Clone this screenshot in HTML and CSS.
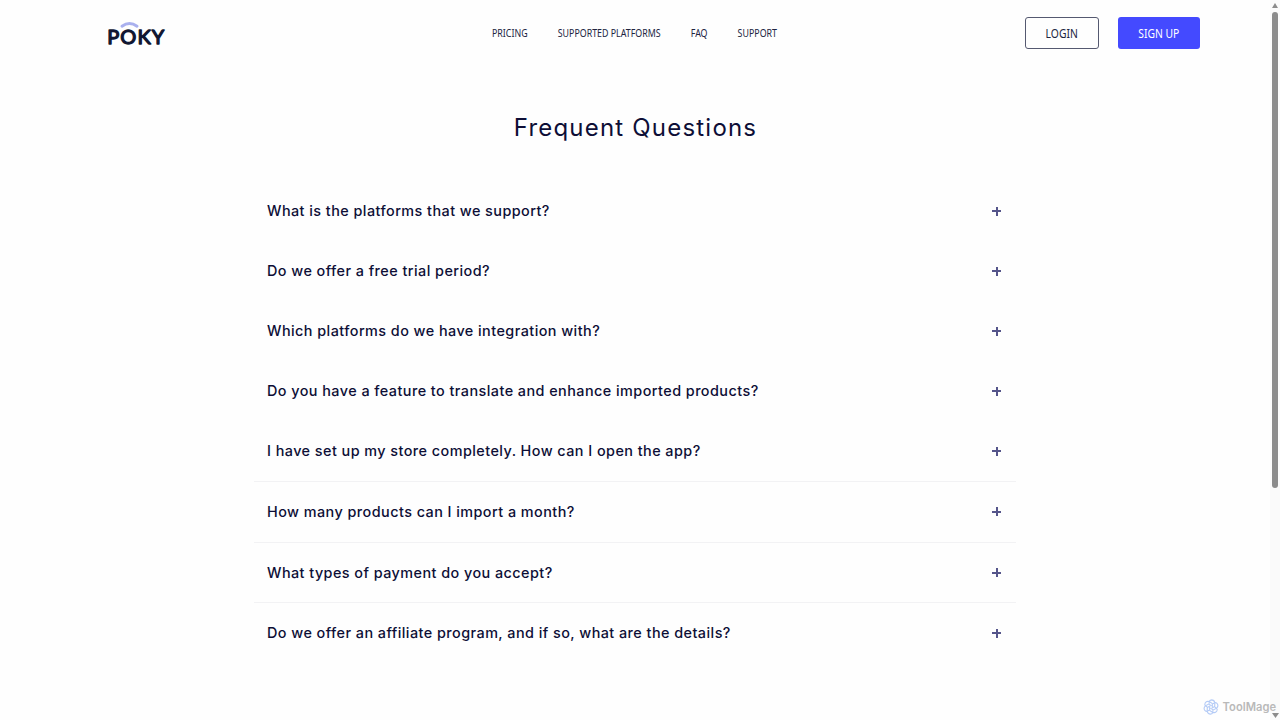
FILE: index.html
```html
<!DOCTYPE html>
<html lang="en">

<head>
    <meta charset="UTF-8">
    <meta name="viewport" content="width=device-width, initial-scale=1.0">
    <title>Poky - FAQ</title>
    <link rel="stylesheet" href="styles.css">
</head>

<body>
    <header class="header">
        <a class="logo">
            <svg width="64" height="34" viewBox="-2 0 64 34">
                <path class="logo-arc" d="M14 10.2 Q21.5 4.8 29 10.2" />
                <text class="logo-text" x="-0.8" y="27.5" textLength="57" lengthAdjust="spacing">POKY</text>
            </svg>
        </a>
        <nav class="nav">
            <a>PRICING</a>
            <a>SUPPORTED PLATFORMS</a>
            <a>FAQ</a>
            <a>SUPPORT</a>
        </nav>
        <div class="actions">
            <a class="btn btn-outline"><span>LOGIN</span></a>
            <a class="btn btn-primary"><span>SIGN UP</span></a>
        </div>
    </header>

    <main class="faq">
        <h1>Frequent Questions</h1>
        <ul class="faq-list">
            <li><span>What is the platforms that we support?</span><i class="plus"></i></li>
            <li><span>Do we offer a free trial period?</span><i class="plus"></i></li>
            <li><span>Which platforms do we have integration with?</span><i class="plus"></i></li>
            <li><span>Do you have a feature to translate and enhance imported products?</span><i class="plus"></i></li>
            <li><span>I have set up my store completely. How can I open the app?</span><i class="plus"></i></li>
            <li class="line"><span>How many products can I import a month?</span><i class="plus"></i></li>
            <li class="line"><span>What types of payment do you accept?</span><i class="plus"></i></li>
            <li class="line"><span>Do we offer an affiliate program, and if so, what are the details?</span><i class="plus"></i></li>
        </ul>
    </main>

    <div class="scrollbar">
        <svg width="6" height="5" viewBox="0 0 6 5"><path d="M3 0 L6 5 H0 Z" /></svg>
        <div class="thumb"></div>
        <svg class="down" width="7" height="5" viewBox="0 0 7 5"><path d="M0 0 H7 L3.5 5 Z" /></svg>
    </div>

    <div class="badge">
        <svg width="16" height="16" viewBox="-8 -8 16 16">
            <defs>
                <path id="petal" d="M-1.8 -3.2 V-5 Q-1.6 -7 .6 -7.1 Q3.2 -7 3.8 -4.3 L3.7 -.6 L.6 1.2" />
            </defs>
            <use href="#petal" />
            <use href="#petal" transform="rotate(60)" />
            <use href="#petal" transform="rotate(120)" />
            <use href="#petal" transform="rotate(180)" />
            <use href="#petal" transform="rotate(240)" />
            <use href="#petal" transform="rotate(300)" />
        </svg>
        <span>ToolMage</span>
    </div>
</body>

</html>
```
FILE: styles.css
```css
* {
    box-sizing: border-box;
}

body {
    margin: 0;
    height: 720px;
    overflow: hidden;
    background: #fefefe;
    color: #0d0e36;
    font-family: Inter, "Liberation Sans", sans-serif;
}

.header {
    display: grid;
    grid-template-columns: 386px 1fr auto;
    align-items: center;
    height: 66px;
    padding: 0 80px 0 106px;
    font-family: "Noto Sans", sans-serif;
}

.logo svg {
    display: block;
}

.logo-arc {
    fill: none;
    stroke: #a9b0ee;
    stroke-width: 3;
    stroke-linecap: round;
}

.logo-text {
    fill: #101631;
    stroke: #101631;
    stroke-width: 1.3;
    stroke-linejoin: round;
    font-family: Lato, sans-serif;
    font-size: 20px;
    font-weight: 400;
}

.nav {
    display: flex;
    gap: 34px;
    font-size: 10px;
    color: #20243f;
    white-space: nowrap;
    transform: scaleX(0.885);
    transform-origin: left;
}

.actions {
    display: flex;
    gap: 19px;
}

.btn {
    display: flex;
    align-items: center;
    justify-content: center;
    height: 32px;
    border-radius: 3px;
    font-size: 12px;
}

.btn span {
    transform: scaleX(0.86);
    white-space: nowrap;
}

.btn-outline {
    width: 74px;
    border: 1px solid #555970;
    color: #20243f;
}

.btn-primary {
    width: 82px;
    background: #444aff;
    color: #fff;
}

.faq {
    width: 762px;
    margin: 0 0 0 254px;
}

.faq h1 {
    margin: 0;
    padding: 46px 0 0 1px;
    height: 115px;
    font-size: 24px;
    line-height: 32px;
    font-weight: 400;
    letter-spacing: 1.2px;
    text-align: center;
}

.faq-list {
    margin: 0;
    padding: 0;
    list-style: none;
}

.faq-list li {
    display: flex;
    align-items: center;
    justify-content: space-between;
    height: 60px;
    padding: 0 15px 0 13px;
    font-size: 14.4px;
    font-weight: 500;
    letter-spacing: 0.45px;
}

.faq-list span {
    padding-bottom: 1px;
}

.faq-list .line {
    height: 60.7px;
    border-top: 1px solid #f2f2f4;
}

.plus {
    width: 9px;
    height: 9px;
    background:
        linear-gradient(#55558a, #55558a) center / 9px 2px no-repeat,
        linear-gradient(#55558a, #55558a) center / 2px 9px no-repeat;
}

.scrollbar {
    position: absolute;
    top: 0;
    right: 0;
    display: flex;
    flex-direction: column;
    align-items: center;
    width: 10px;
    height: 720px;
    padding: 3px 0 2px;
    background: #fafafa;
    fill: #8b8b8b;
}

.thumb {
    width: 6px;
    height: 476px;
    margin-top: 4px;
    border-radius: 3px;
    background: #8b8b8b;
}

.scrollbar .down {
    margin-top: auto;
}

.badge {
    position: absolute;
    right: 4px;
    bottom: 5px;
    display: flex;
    align-items: center;
    gap: 4px;
    color: #b9b9b9;
    font-size: 11.2px;
    font-weight: 600;
}

.badge svg {
    fill: none;
    stroke: #b4cbf6;
    stroke-width: 1.1;
}
```
